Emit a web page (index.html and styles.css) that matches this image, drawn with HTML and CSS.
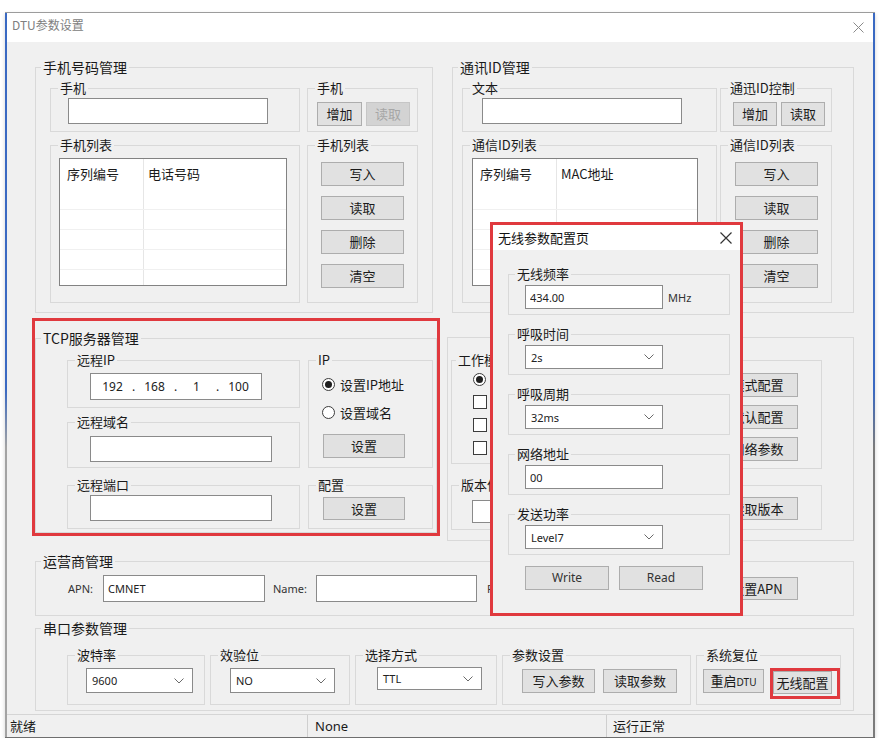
FILE: index.html
```html
<!DOCTYPE html>
<html lang="zh-CN">
<head>
    <meta charset="UTF-8">
    <meta name="viewport" content="width=device-width, initial-scale=1.0">
    <title>DTU参数设置</title>
    <link rel="stylesheet" href="styles.css">
</head>
<body>
    <div class="window">
        <div class="titlebar">
            <span class="title">DTU参数设置</span>
            <svg class="close" width="11" height="11" viewBox="0 0 11 11"><path d="M0.5 0.5L10.5 10.5M10.5 0.5L0.5 10.5"/></svg>
        </div>

        <div class="panel">
            <!-- row 1: phone numbers / comm ids -->
            <div class="row-top">
                <fieldset class="grp grp-phone">
                    <legend>手机号码管理</legend>
                    <div class="split-body phone-body">
                        <fieldset class="sub">
                            <legend>手机</legend>
                            <input class="txt phone-input" type="text">
                        </fieldset>
                        <fieldset class="sub">
                            <legend>手机</legend>
                            <div class="ctrl-row phone-ctrl">
                                <button class="btn w45">增加</button>
                                <button class="btn w44" disabled>读取</button>
                            </div>
                        </fieldset>
                        <fieldset class="sub">
                            <legend>手机列表</legend>
                            <div class="list phone-list">
                                <div class="list-head"><span>序列编号</span><span>电话号码</span></div>
                                <div class="list-row"></div>
                                <div class="list-row line"></div>
                                <div class="list-row line"></div>
                                <div class="list-row line"></div>
                                <div class="list-row line"></div>
                            </div>
                        </fieldset>
                        <fieldset class="sub">
                            <legend>手机列表</legend>
                            <div class="btn-col phone-btns">
                                <button class="btn">写入</button>
                                <button class="btn">读取</button>
                                <button class="btn">删除</button>
                                <button class="btn">清空</button>
                            </div>
                        </fieldset>
                    </div>
                </fieldset>

                <fieldset class="grp grp-id">
                    <legend>通讯ID管理</legend>
                    <div class="split-body id-body">
                        <fieldset class="sub">
                            <legend>文本</legend>
                            <input class="txt id-input" type="text">
                        </fieldset>
                        <fieldset class="sub">
                            <legend>通迅ID控制</legend>
                            <div class="ctrl-row id-ctrl">
                                <button class="btn w44">增加</button>
                                <button class="btn w44">读取</button>
                            </div>
                        </fieldset>
                        <fieldset class="sub">
                            <legend>通信ID列表</legend>
                            <div class="list id-list">
                                <div class="list-head"><span>序列编号</span><span>MAC地址</span></div>
                                <div class="list-row"></div>
                                <div class="list-row line"></div>
                                <div class="list-row line"></div>
                                <div class="list-row line"></div>
                                <div class="list-row line"></div>
                            </div>
                        </fieldset>
                        <fieldset class="sub">
                            <legend>通信ID列表</legend>
                            <div class="btn-col id-btns">
                                <button class="btn">写入</button>
                                <button class="btn">读取</button>
                                <button class="btn">删除</button>
                                <button class="btn">清空</button>
                            </div>
                        </fieldset>
                    </div>
                </fieldset>
            </div>

            <!-- row 2: tcp server / work mode -->
            <div class="row-mid">
                <div class="hl-tcp">
                    <fieldset class="grp grp-tcp">
                        <legend>TCP服务器管理</legend>
                        <div class="tcp-body">
                            <fieldset class="sub">
                                <legend>远程IP</legend>
                                <div class="ip-box">
                                    <span class="seg">192</span><span class="dot">.</span>
                                    <span class="seg">168</span><span class="dot">.</span>
                                    <span class="seg">1</span><span class="dot">.</span>
                                    <span class="seg">100</span>
                                </div>
                            </fieldset>
                            <fieldset class="sub sub-ipmode">
                                <legend>IP</legend>
                                <div class="ipmode-opts">
                                    <div class="opt"><span class="radio on"></span>设置IP地址</div>
                                    <div class="opt"><span class="radio"></span>设置域名</div>
                                </div>
                                <button class="btn ipmode-btn">设置</button>
                            </fieldset>
                            <fieldset class="sub sub-domain">
                                <legend>远程域名</legend>
                                <input class="txt domain-input" type="text">
                            </fieldset>
                            <fieldset class="sub">
                                <legend>远程端口</legend>
                                <input class="txt domain-input port-input" type="text">
                            </fieldset>
                            <fieldset class="sub">
                                <legend>配置</legend>
                                <button class="btn cfg-btn">设置</button>
                            </fieldset>
                        </div>
                    </fieldset>
                </div>

                <div class="box-mode">
                    <fieldset class="sub sub-work">
                        <legend>工作模式</legend>
                        <div class="mode-opts">
                            <span class="radio on"></span>
                            <span class="check"></span>
                            <span class="check"></span>
                            <span class="check"></span>
                        </div>
                    </fieldset>
                    <div class="box-plain plain-cfg">
                        <button class="btn">模式配置</button>
                        <button class="btn">默认配置</button>
                        <button class="btn">网络参数</button>
                    </div>
                    <fieldset class="sub sub-ver">
                        <legend>版本信息</legend>
                        <input class="txt ver-input" type="text">
                    </fieldset>
                    <div class="box-plain plain-ver">
                        <button class="btn">读取版本</button>
                    </div>
                </div>
            </div>

            <!-- row 3: carrier -->
            <fieldset class="grp grp-apn">
                <legend>运营商管理</legend>
                <div class="apn-body">
                    <span class="lbl lbl-apn">APN:</span>
                    <input class="txt apn-input" type="text" value="CMNET">
                    <span class="lbl lbl-name">Name:</span>
                    <input class="txt name-input" type="text">
                    <span class="lbl lbl-pwd">Pwd:</span>
                    <input class="txt pwd-input" type="text">
                    <button class="btn apn-btn">设置APN</button>
                </div>
            </fieldset>

            <!-- row 4: serial port -->
            <fieldset class="grp grp-com">
                <legend>串口参数管理</legend>
                <div class="com-body">
                    <fieldset class="sub">
                        <legend>波特率</legend>
                        <div class="combo combo-baud"><span>9600</span><svg class="chev" width="10" height="6" viewBox="0 0 10 6"><path d="M0.5 0.5L5 5L9.5 0.5"/></svg></div>
                    </fieldset>
                    <fieldset class="sub">
                        <legend>效验位</legend>
                        <div class="combo combo-parity"><span>NO</span><svg class="chev" width="10" height="6" viewBox="0 0 10 6"><path d="M0.5 0.5L5 5L9.5 0.5"/></svg></div>
                    </fieldset>
                    <fieldset class="sub">
                        <legend>选择方式</legend>
                        <div class="combo combo-mode"><span>TTL</span><svg class="chev" width="10" height="6" viewBox="0 0 10 6"><path d="M0.5 0.5L5 5L9.5 0.5"/></svg></div>
                    </fieldset>
                    <fieldset class="sub">
                        <legend>参数设置</legend>
                        <div class="param-btns">
                            <button class="btn w73">写入参数</button>
                            <button class="btn w74">读取参数</button>
                        </div>
                    </fieldset>
                    <fieldset class="sub">
                        <legend>系统复位</legend>
                        <div class="reset-btns">
                            <button class="btn w62 btn-dtu">重启<span class="small">DTU</span></button>
                            <span class="hl-btn"><button class="btn w59">无线配置</button></span>
                        </div>
                    </fieldset>
                </div>
            </fieldset>
        </div>

        <div class="statusbar">
            <span class="st-ready">就绪</span>
            <span class="st-port">None</span>
            <span class="st-run">运行正常</span>
        </div>
    </div>

    <!-- wireless settings dialog on top -->
    <div class="popup">
        <div class="popup-title">
            <span>无线参数配置页</span>
            <svg class="popup-close" width="12" height="12" viewBox="0 0 12 12"><path d="M0.5 0.5L11.5 11.5M11.5 0.5L0.5 11.5"/></svg>
        </div>
        <div class="popup-body">
            <fieldset class="sub psub">
                <legend>无线频率</legend>
                <div class="pfield"><input class="txt" type="text" value="434.00"><span class="mhz">MHz</span></div>
            </fieldset>
            <fieldset class="sub psub">
                <legend>呼吸时间</legend>
                <div class="pfield"><div class="combo"><span>2s</span><svg class="chev" width="10" height="6" viewBox="0 0 10 6"><path d="M0.5 0.5L5 5L9.5 0.5"/></svg></div></div>
            </fieldset>
            <fieldset class="sub psub">
                <legend>呼吸周期</legend>
                <div class="pfield"><div class="combo"><span>32ms</span><svg class="chev" width="10" height="6" viewBox="0 0 10 6"><path d="M0.5 0.5L5 5L9.5 0.5"/></svg></div></div>
            </fieldset>
            <fieldset class="sub psub">
                <legend>网络地址</legend>
                <div class="pfield"><input class="txt" type="text" value="00"></div>
            </fieldset>
            <fieldset class="sub psub">
                <legend>发送功率</legend>
                <div class="pfield"><div class="combo"><span>Level7</span><svg class="chev" width="10" height="6" viewBox="0 0 10 6"><path d="M0.5 0.5L5 5L9.5 0.5"/></svg></div></div>
            </fieldset>
            <div class="popup-btns">
                <button class="btn">Write</button>
                <button class="btn">Read</button>
            </div>
        </div>
    </div>
</body>
</html>
```

FILE: styles.css
```css
* {
    box-sizing: border-box;
}
body {
    margin: 0;
    background: #fff;
    font-family: "Noto Sans CJK SC", "Noto Sans", sans-serif;
    font-size: 13px;
    color: #1a1a1a;
}

/* window frame */
.window {
    display: flex;
    flex-direction: column;
    width: 870px;
    height: 726px;
    margin: 12px 0 0 5px;
    padding: 0 2px;
    border-top: 1px solid #9c9c9c;
    border-bottom: 1px solid #6e6e6e;
    background:
        linear-gradient(#3a69c2 0, #3a69c2 52%, #a3a3a3 60%) left top / 2px 100% no-repeat,
        linear-gradient(#3a69c2 0, #3a69c2 52%, #7b7b7b 60%) right top / 2px 100% no-repeat,
        #fff;
    box-shadow: 0 2px 4px rgba(0,0,0,0.18);
}
.titlebar {
    display: flex;
    justify-content: space-between;
    height: 29px;
    padding: 4px 9px 0 5px;
    background: #fff;
}
.title {
    font-size: 12px;
    line-height: 16px;
    color: #808080;
}
.close {
    margin-top: 5px;
    fill: none;
    stroke: #8a8a8a;
    stroke-width: 1;
}
.panel {
    flex: 1;
    padding: 17px 0 0 28px;
    background: #f0f0f0;
}
.statusbar {
    display: flex;
    height: 23px;
    border-top: 1px solid #d5d5d5;
    background: #f0f0f0;
    line-height: 22px;
}
.st-ready {
    width: 301px;
    padding-left: 3px;
    border-right: 1px solid #cfcfcf;
}
.st-port {
    width: 299px;
    padding-left: 7px;
    border-right: 1px solid #cfcfcf;
    font-family: "Noto Sans", sans-serif;
}
.st-run {
    padding-left: 6px;
}

/* group boxes */
fieldset {
    margin: 0;
    padding: 0;
    min-width: 0;
    border: 1px solid #d9d9d9;
}
legend {
    padding: 0 2px;
    line-height: 16px;
}
.grp > legend {
    margin-left: 5px;
    font-size: 14px;
}
.sub > legend {
    margin-left: 7px;
    font-size: 13px;
}

/* controls */
.btn {
    display: block;
    height: 24px;
    padding: 0;
    border: 1px solid #adadad;
    background: #e1e1e1;
    font: inherit;
    font-size: 13px;
    line-height: 20px;
    color: #1a1a1a;
}
.btn:disabled {
    background: #d3d3d3;
    border-color: #c6c6c6;
    color: #a6a6a6;
}
.btn-dtu {
    white-space: nowrap;
}
.btn-dtu .small {
    font-family: "Noto Sans", sans-serif;
    font-size: 10px;
}
.w44 { width: 44px; }
.w45 { width: 45px; }
.w59 { width: 59px; }
.w62 { width: 62px; }
.w73 { width: 73px; }
.w74 { width: 74px; }
.txt {
    display: block;
    height: 26px;
    padding: 0 4px;
    border: 1px solid #8a8a8a;
    background: #fff;
    font-family: "Noto Sans", sans-serif;
    font-size: 11px;
    color: #222;
    outline: none;
}
.combo {
    display: flex;
    align-items: center;
    justify-content: space-between;
    height: 25px;
    padding: 0 8px 0 5px;
    border: 1px solid #8a8a8a;
    background: #fff;
    font-family: "Noto Sans", sans-serif;
    font-size: 11px;
    color: #222;
}
.chev {
    fill: none;
    stroke: #6a6a6a;
    stroke-width: 1;
}
.lbl {
    font-family: "Noto Sans", sans-serif;
    font-size: 11px;
    color: #333;
}
.opt {
    display: flex;
    align-items: center;
    gap: 5px;
    height: 16px;
}
.radio {
    display: inline-flex;
    align-items: center;
    justify-content: center;
    flex: none;
    width: 13px;
    height: 13px;
    border: 1px solid #3c3c3c;
    border-radius: 50%;
    background: #fff;
}
.radio.on::after {
    content: "";
    width: 7px;
    height: 7px;
    border-radius: 50%;
    background: #1f1f1f;
}
.check {
    flex: none;
    width: 14px;
    height: 14px;
    border: 1px solid #3c3c3c;
    background: #fff;
}

/* row 1 */
.row-top {
    display: flex;
    gap: 19px;
}
.grp-phone {
    width: 398px;
    height: 254px;
}
.grp-id {
    width: 402px;
    height: 254px;
}
.split-body {
    display: grid;
    grid-template-rows: 52px 166px;
    row-gap: 5px;
    padding-top: 5px;
}
.phone-body {
    grid-template-columns: 250px 111px;
    column-gap: 7px;
    padding-left: 14px;
}
.id-body {
    grid-template-columns: 255px 112px;
    column-gap: 3px;
    padding-left: 9px;
}
.phone-input {
    width: 200px;
    margin: 2px 0 0 17px;
}
.id-input {
    width: 200px;
    margin: 2px 0 0 19px;
}
.ctrl-row {
    display: flex;
    gap: 4px;
    margin-top: 6px;
}
.phone-ctrl { margin-left: 9px; }
.id-ctrl { margin-left: 12px; }
.list {
    height: 128px;
    margin-top: 5px;
    border: 1px solid #828282;
    background: linear-gradient(#e6e6e6, #e6e6e6) 83px 0 / 1px 100% no-repeat, #fff;
}
.phone-list {
    width: 228px;
    margin-left: 8px;
}
.id-list {
    width: 226px;
    margin-left: 9px;
}
.list-head {
    display: flex;
    height: 30px;
    line-height: 30px;
}
.list-head span:first-child {
    width: 83px;
    padding-left: 7px;
}
.list-head span + span {
    padding-left: 5px;
}
.list-row {
    height: 20px;
}
.list-row.line {
    border-top: 1px solid #f0f0f0;
}
.btn-col {
    display: flex;
    flex-direction: column;
    gap: 10px;
    margin-top: 9px;
}
.btn-col .btn {
    width: 83px;
}
.phone-btns { margin-left: 13px; }
.id-btns { margin-left: 14px; }

/* row 2 */
.row-mid {
    display: flex;
    align-items: flex-start;
    margin-top: 5px;
}
.hl-tcp {
    width: 408px;
    height: 218px;
    margin-left: -3px;
    padding-top: 9px;
    border: 3px solid #e0393e;
}
.grp-tcp {
    height: 203px;
}
.tcp-body {
    display: grid;
    grid-template-columns: 233px 125px;
    grid-template-rows: 56px 57px 52px;
    gap: 6px 8px;
    padding: 6px 0 0 31px;
}
.sub-ipmode {
    grid-row: span 2;
    height: 116px;
}
.sub-domain {
    height: 54px;
    align-self: start;
}
.ip-box {
    display: flex;
    width: 172px;
    height: 27px;
    margin: 5px 0 0 22px;
    padding-left: 3px;
    border: 1px solid #8a8a8a;
    background: #fff;
    font-family: "Noto Sans", sans-serif;
    font-size: 12px;
    line-height: 25px;
    color: #222;
}
.ip-box .seg {
    width: 37px;
    text-align: center;
}
.ip-box .dot {
    width: 5px;
    text-align: center;
}
.domain-input {
    width: 182px;
    margin: 6px 0 0 22px;
}
.port-input {
    margin-top: 2px;
}
.ipmode-opts {
    margin: 8px 0 0 13px;
}
.ipmode-opts .opt + .opt {
    margin-top: 12px;
}
.ipmode-btn {
    width: 82px;
    margin: 14px 0 0 14px;
}
.cfg-btn {
    width: 82px;
    height: 23px;
    margin: 4px 0 0 14px;
}
.box-mode {
    display: grid;
    grid-template-columns: 250px 114px;
    grid-template-rows: 117px 53px;
    gap: 8px 7px;
    width: 407px;
    height: 204px;
    margin: 19px 0 0 7px;
    padding: 14px 0 0 3px;
    border: 1px solid #d9d9d9;
}
.sub-work {
    height: 112px;
}
.sub-work > legend {
    margin-left: 4px;
}
.mode-opts {
    display: flex;
    flex-direction: column;
    align-items: flex-start;
    gap: 9px;
    margin: 5px 0 0 21px;
}
.box-plain {
    display: flex;
    flex-direction: column;
    gap: 8px;
    margin-top: 8px;
    padding-left: 8px;
    border: 1px solid #d9d9d9;
}
.box-plain .btn {
    width: 81px;
}
.plain-cfg {
    height: 109px;
    padding-top: 12px;
}
.plain-ver {
    height: 45px;
    padding-top: 11px;
}
.plain-ver .btn {
    height: 23px;
}
.ver-input {
    width: 220px;
    height: 23px;
    margin: 7px 0 0 20px;
}

/* row 3 */
.grp-apn {
    width: 819px;
    height: 63px;
    margin-top: 12px;
}
.apn-body {
    display: flex;
    align-items: center;
    height: 33px;
    padding: 6px 55px 0 32px;
}
.lbl-apn { width: 35px; }
.apn-input {
    width: 162px;
    height: 27px;
}
.lbl-name {
    width: 43px;
    margin-left: 8px;
}
.name-input {
    width: 161px;
    height: 27px;
}
.lbl-pwd {
    width: 36px;
    margin-left: 10px;
}
.pwd-input {
    width: 150px;
    height: 27px;
}
.apn-btn {
    width: 82px;
    height: 23px;
    margin-left: auto;
}

/* row 4 */
.grp-com {
    width: 819px;
    height: 91px;
    margin-top: 4px;
}
.com-body {
    display: grid;
    grid-template-columns: 138px 140px 142px 189px 145px;
    column-gap: 5px;
    padding: 11px 0 0 31px;
}
.com-body .sub {
    height: 58px;
}
.combo-baud {
    width: 107px;
    margin: 5px 0 0 18px;
}
.combo-parity {
    width: 105px;
    margin: 5px 0 0 19px;
}
.combo-mode {
    width: 105px;
    height: 23px;
    margin: 4px 0 0 21px;
}
.param-btns {
    display: flex;
    gap: 8px;
    margin: 6px 0 0 19px;
}
.reset-btns {
    display: flex;
    align-items: flex-start;
    margin: 6px 0 0 6px;
}
.hl-btn {
    width: 71px;
    height: 31px;
    margin: -1px 0 0 6px;
    border: 3px solid #e0393e;
}
.hl-btn .btn {
    height: 23px;
}

/* wireless dialog */
.popup {
    position: absolute;
    left: 490px;
    top: 222px;
    width: 253px;
    height: 394px;
    border: 3px solid #e0393e;
    background: #f0f0f0;
}
.popup-title {
    display: flex;
    align-items: center;
    justify-content: space-between;
    height: 25px;
    padding: 0 8px 0 5px;
    background: #fff;
    color: #111;
}
.popup-close {
    fill: none;
    stroke: #333;
    stroke-width: 1.2;
}
.popup-body {
    padding: 16px 0 0 15px;
}
.psub {
    width: 222px;
    height: 49px;
    margin-bottom: 11px;
}
.psub > legend {
    margin-left: 6px;
}
.pfield {
    display: flex;
    align-items: center;
    margin: 3px 0 0 16px;
}
.pfield .txt,
.pfield .combo {
    width: 138px;
    height: 24px;
}
.mhz {
    margin-left: 5px;
    font-family: "Noto Sans", sans-serif;
    font-size: 11px;
    color: #333;
}
.popup-btns {
    display: flex;
    gap: 10px;
    margin-left: 17px;
}
.popup-btns .btn {
    width: 84px;
    font-family: "Noto Sans", sans-serif;
    font-size: 12px;
    color: #333;
}
```
